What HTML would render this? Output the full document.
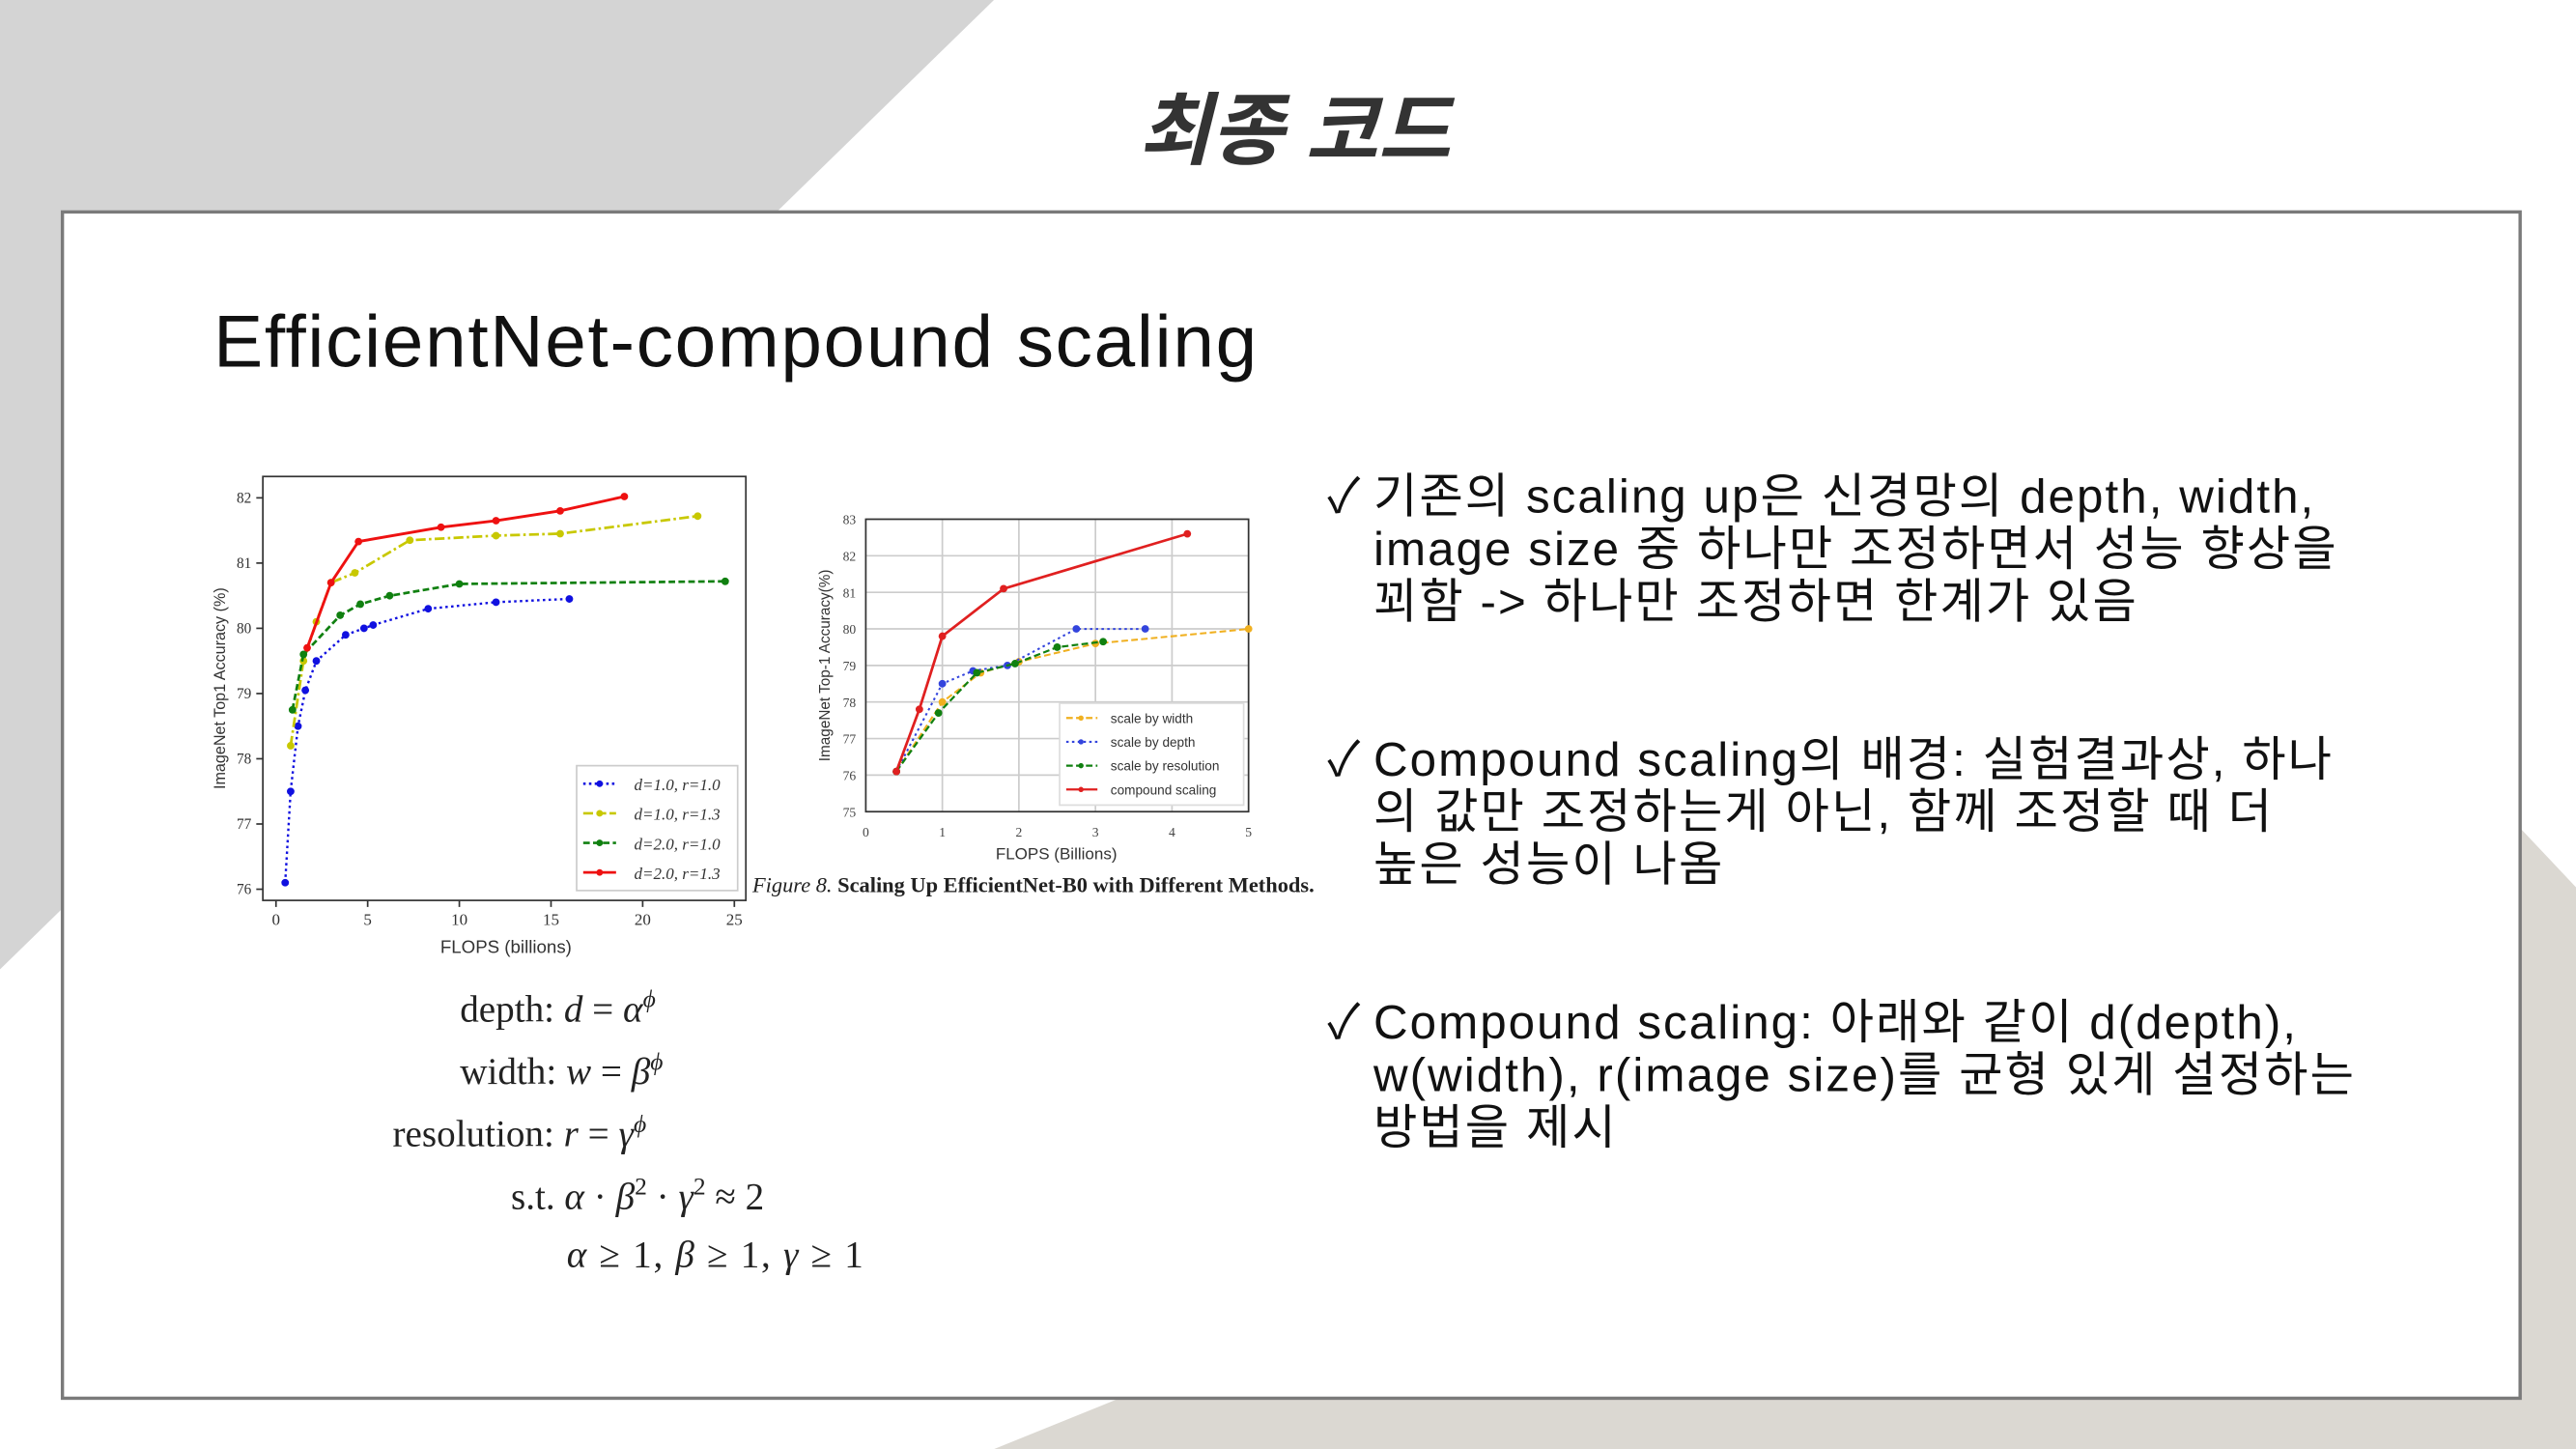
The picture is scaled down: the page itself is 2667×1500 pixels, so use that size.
<!DOCTYPE html>
<html><head><meta charset="utf-8"><style>
html,body{margin:0;padding:0;width:2667px;height:1500px;overflow:hidden;background:#fff}
#s{position:absolute;left:0;top:0;width:1568px;height:882px;transform:scale(1.70089);transform-origin:0 0;font-family:"Liberation Sans","Noto Sans CJK KR",sans-serif}
.t{position:absolute;white-space:nowrap}
.b{position:absolute;left:808px;font-size:29px;line-height:32px;color:#111;white-space:nowrap;letter-spacing:1.2px}
.b span{position:absolute;left:0;letter-spacing:0}
.b div{margin-left:28px}
.eq{position:absolute;font-family:"Liberation Serif",serif;font-size:23px;color:#222;white-space:nowrap}
.eq i{font-style:italic}
</style></head><body><div id="s">
<svg width="1568" height="882" style="position:absolute;left:0;top:0">
<polygon points="0,0 605,0 0,590" fill="#d4d4d4"/>
<polygon points="1535,505 1568,540 1568,882 605,882" fill="#dbd8d2"/>
<rect x="38" y="129" width="1496" height="722" fill="#fff" stroke="#7a7a7a" stroke-width="2"/>
</svg>
<div class="t" style="left:0;width:1576px;text-align:center;top:40px;font-size:48px;font-weight:bold;font-style:italic;color:#333">최종 코드</div>
<div class="t" style="left:130px;top:182px;font-size:45px;color:#111;letter-spacing:1px">EfficientNet-compound scaling</div>
<svg id="ch" width="1568" height="882" style="position:absolute;left:0;top:0" font-family="Liberation Sans, sans-serif"></svg>
<div class="b" style="top:287px"><span>✓</span><div>기존의 scaling up은 신경망의 depth, width,<br>image size 중 하나만 조정하면서 성능 향상을<br>꾀함 -&gt; 하나만 조정하면 한계가 있음</div></div>
<div class="b" style="top:447px"><span>✓</span><div>Compound scaling의 배경: 실험결과상, 하나<br>의 값만 조정하는게 아닌, 함께 조정할 때 더<br>높은 성능이 나옴</div></div>
<div class="b" style="top:607px"><span>✓</span><div>Compound scaling: 아래와 같이 d(depth),<br>w(width), r(image size)를 균형 있게 설정하는<br>방법을 제시</div></div>
<div class="eq" style="left:280px;top:601px">depth: <i>d</i> = <i>α</i><sup style="font-size:15px"><i>ϕ</i></sup></div>
<div class="eq" style="left:280px;top:639px">width: <i>w</i> = <i>β</i><sup style="font-size:15px"><i>ϕ</i></sup></div>
<div class="eq" style="left:239px;top:677px">resolution: <i>r</i> = <i>γ</i><sup style="font-size:15px"><i>ϕ</i></sup></div>
<div class="eq" style="left:311px;top:715px">s.t. <i>α</i> · <i>β</i><sup style="font-size:15px">2</sup> · <i>γ</i><sup style="font-size:15px">2</sup> ≈ 2</div>
<div class="eq" style="left:345px;top:751px;letter-spacing:1px"><i>α</i> ≥ 1, <i>β</i> ≥ 1, <i>γ</i> ≥ 1</div>
</div>
<script>
var s=document.getElementById('ch'),h='';
h+='<rect x="160" y="290" width="294" height="258" fill="none" stroke="#333" stroke-width="1"/>';
var X=function(v){return 168+v*11.16},Y=function(v){return 303+(82-v)*39.7};
for(var v=76;v<=82;v++){h+='<line x1="156" x2="160" y1="'+Y(v)+'" y2="'+Y(v)+'" stroke="#333"/><text x="153" y="'+(Y(v)+3)+'" font-size="9" text-anchor="end" fill="#333" font-family="Liberation Serif">'+v+'</text>';}
for(var v=0;v<=25;v+=5){h+='<line y1="548" y2="552" x1="'+X(v)+'" x2="'+X(v)+'" stroke="#333"/><text y="563" x="'+X(v)+'" font-size="10" text-anchor="middle" fill="#333" font-family="Liberation Serif">'+v+'</text>';}
h+='<text x="308" y="580" font-size="11" text-anchor="middle" fill="#333">FLOPS (billions)</text>';
h+='<text transform="translate(137,419) rotate(-90)" font-size="9.5" text-anchor="middle" fill="#333">ImageNet Top1 Accuracy (%)</text>';
function ser(d,c,dash,w,fx,fy){var p=d.map(function(a){return fx(a[0]).toFixed(1)+','+fy(a[1]).toFixed(1)}).join(' ');
 var r='<polyline points="'+p+'" fill="none" stroke="'+c+'" stroke-width="'+w+'" stroke-dasharray="'+dash+'"/>';
 d.forEach(function(a){r+='<circle cx="'+fx(a[0])+'" cy="'+fy(a[1])+'" r="2.3" fill="'+c+'"/>'});return r;}
h+=ser([[0.5,76.1],[0.8,77.5],[1.2,78.5],[1.6,79.05],[2.2,79.5],[3.8,79.9],[4.8,80],[5.3,80.05],[8.3,80.3],[12,80.4],[16,80.45]],'#1010e0','1.5,2',1.4,X,Y);
h+=ser([[0.8,78.2],[1.5,79.5],[2.2,80.1],[3,80.7],[4.3,80.85],[7.3,81.35],[12,81.42],[15.5,81.45],[23,81.72]],'#c8c800','6,2,1.5,2',1.6,X,Y);
h+=ser([[0.9,78.75],[1.5,79.6],[3.5,80.2],[4.6,80.37],[6.2,80.5],[10,80.68],[24.5,80.72]],'#108010','4,2',1.6,X,Y);
h+=ser([[1.7,79.7],[3,80.7],[4.5,81.33],[9,81.55],[12,81.65],[15.5,81.8],[19,82.02]],'#ee1111','',1.7,X,Y);
h+='<rect x="351" y="466" width="98" height="76" fill="#fff" stroke="#ccc"/>';
var lg=[['#1010e0','1.5,2','d=1.0, r=1.0'],['#c8c800','6,2','d=1.0, r=1.3'],['#108010','4,2','d=2.0, r=1.0'],['#ee1111','','d=2.0, r=1.3']];
lg.forEach(function(a,i){var y=477+i*18;h+='<line x1="355" x2="375" y1="'+y+'" y2="'+y+'" stroke="'+a[0]+'" stroke-width="1.6" stroke-dasharray="'+a[1]+'"/><circle cx="365" cy="'+y+'" r="2" fill="'+a[0]+'"/><text x="386" y="'+(y+4)+'" font-size="10" font-style="italic" fill="#333" font-family="Liberation Serif">'+a[2]+'</text>';});
var X2=function(v){return 527+v*46.6},Y2=function(v){return 316+(83-v)*22.25};
for(var v=75;v<=83;v++){h+='<line x1="527" x2="760" y1="'+Y2(v)+'" y2="'+Y2(v)+'" stroke="#ccc"/><text x="521" y="'+(Y2(v)+3)+'" font-size="8" text-anchor="end" fill="#444" font-family="Liberation Serif">'+v+'</text>';}
for(var v=0;v<=5;v++){h+='<line y1="316" y2="494" x1="'+X2(v)+'" x2="'+X2(v)+'" stroke="#ccc"/><text y="509" x="'+X2(v)+'" font-size="8" text-anchor="middle" fill="#444" font-family="Liberation Serif">'+v+'</text>';}
h+='<rect x="527" y="316" width="233" height="178" fill="none" stroke="#333"/>';
h+='<text x="643" y="523" font-size="10" text-anchor="middle" fill="#333">FLOPS (Billions)</text>';
h+='<text transform="translate(505,405) rotate(-90)" font-size="9" text-anchor="middle" fill="#333">ImageNet Top-1 Accuracy(%)</text>';
h+=ser([[0.4,76.1],[1,78],[1.5,78.8],[2,79.1],[3,79.6],[5,80]],'#f0b020','4,2',1.2,X2,Y2);
h+=ser([[0.4,76.1],[1,78.5],[1.4,78.85],[1.85,79],[2.75,80],[3.65,80]],'#3344dd','1.5,2',1.2,X2,Y2);
h+=ser([[0.4,76.1],[0.95,77.7],[1.45,78.8],[1.95,79.05],[2.5,79.5],[3.1,79.65]],'#108010','4,2',1.3,X2,Y2);
h+=ser([[0.4,76.1],[0.7,77.8],[1,79.8],[1.8,81.1],[4.2,82.6]],'#e02020','',1.6,X2,Y2);
h+='<rect x="645" y="428" width="112" height="62" fill="#fff" stroke="#ddd"/>';
var lg2=[['#f0b020','4,2','scale by width'],['#3344dd','1.5,2','scale by depth'],['#108010','4,2','scale by resolution'],['#e02020','','compound scaling']];
lg2.forEach(function(a,i){var y=437+i*14.5;h+='<line x1="649" x2="668" y1="'+y+'" y2="'+y+'" stroke="'+a[0]+'" stroke-width="1.3" stroke-dasharray="'+a[1]+'"/><circle cx="658" cy="'+y+'" r="1.6" fill="'+a[0]+'"/><text x="676" y="'+(y+3)+'" font-size="8" fill="#333">'+a[2]+'</text>';});
h+='<text x="458" y="543" font-size="13" fill="#222" font-family="Liberation Serif" textLength="342" lengthAdjust="spacingAndGlyphs"><tspan font-style="italic">Figure 8.</tspan><tspan font-weight="bold"> Scaling Up EfficientNet-B0 with Different Methods.</tspan></text>';
s.innerHTML=h;
</script>
</body></html>
